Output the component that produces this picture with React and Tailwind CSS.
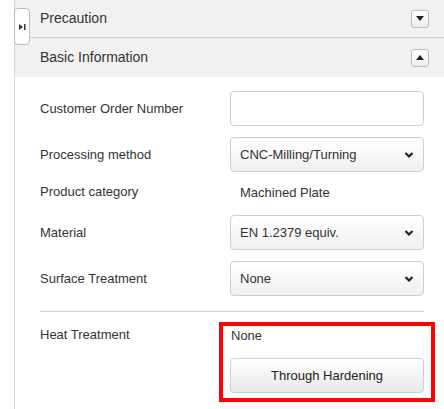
import React from "react";

function Chevron() {
  return (
    <svg width="10" height="8" viewBox="0 0 10 8" className="shrink-0">
      <path d="M1.5 2 L5 5.5 L8.5 2" fill="none" stroke="#222" strokeWidth="2.2" />
    </svg>
  );
}

function SelectBox({ value }) {
  return (
    <div className="flex h-[35px] w-[194px] items-center justify-between rounded-[4px] border border-[#cfcfcf] bg-gradient-to-b from-white to-[#f0f0f0] pl-[9px] pr-[9px] text-[13px] text-[#333]">
      <span>{value}</span>
      <Chevron />
    </div>
  );
}

function Toggle({ up }) {
  return (
    <div className="flex h-[18px] w-[18px] items-center justify-center rounded-[3px] border border-[#bdbdbd] bg-gradient-to-b from-white to-[#ececec]">
      <svg width="8" height="5" viewBox="0 0 8 5">
        {up ? <path d="M0 5 L4 0 L8 5 Z" fill="#222" /> : <path d="M0 0 L8 0 L4 5 Z" fill="#222" />}
      </svg>
    </div>
  );
}

function Row({ label, children, className }) {
  return (
    <div className={"flex items-center " + (className || "")}>
      <div className="w-[190px] shrink-0 text-[13px] text-[#333]">{label}</div>
      <div>{children}</div>
    </div>
  );
}

export default function App() {
  return (
    <div className="relative h-[409px] w-[444px] overflow-hidden bg-white font-['Liberation_Sans',Arial,sans-serif]">
      <div className="ml-[14px] flex h-full flex-col border-l border-[#d4d4d4]">
        <div className="flex h-[38px] items-center justify-between border-b border-[#d2d2d2] bg-[#f1f1f1] pl-[25px] pr-[15px]">
          <span className="text-[14px] text-[#333]">Precaution</span>
          <Toggle />
        </div>
        <div className="flex h-[39px] items-center justify-between bg-[#f1f1f1] pl-[25px] pr-[15px]">
          <span className="text-[14px] text-[#333]">Basic Information</span>
          <Toggle up />
        </div>
        <div className="flex flex-col pl-[25px] pr-[20px]">
          <Row label="Customer Order Number" className="mt-[14px] h-[35px]">
            <div className="h-[35px] w-[194px] rounded-[4px] border border-[#cfcfcf] bg-white" />
          </Row>
          <Row label="Processing method" className="mt-[11px] h-[35px]">
            <SelectBox value="CNC-Milling/Turning" />
          </Row>
          <Row label="Product category" className="mt-[10px] h-[20px]">
            <span className="pl-[10px] text-[13px] text-[#333]">Machined Plate</span>
          </Row>
          <Row label="Material" className="mt-[13px] h-[35px]">
            <SelectBox value="EN 1.2379 equiv." />
          </Row>
          <Row label="Surface Treatment" className="mt-[11px] h-[35px]">
            <SelectBox value="None" />
          </Row>
          <div className="mt-[15px] h-px w-[384px] bg-[#d0d0d0]" />
          <div className="mt-[10px] flex">
            <div className="w-[179px] shrink-0 pt-[3px] text-[13px] leading-[20px] text-[#333]">Heat Treatment</div>
            <div className="w-[216px] shrink-0 border-4 border-[#ff0000] pb-[5px] pl-[7px] pr-[8px] pt-[2px]">
              <div className="pl-[1px] text-[13px] leading-[16px] text-[#333]">None</div>
              <div className="mt-[14px] flex h-[35px] w-[194px] items-center justify-center rounded-[4px] border border-[#cfcfcf] bg-gradient-to-b from-white to-[#e8e8e8] text-[13px] text-[#222]">
                Through Hardening
              </div>
            </div>
          </div>
        </div>
      </div>
      <div className="absolute left-[14px] top-[8px] flex h-[37px] w-[16px] items-center justify-center rounded-[4px] border border-[#bdbdbd] bg-white">
        <svg width="7" height="6" viewBox="0 0 7 6">
          <path d="M0 0 L4 3 L0 6 Z" fill="#333" />
          <rect x="5" y="0" width="1.5" height="6" fill="#333" />
        </svg>
      </div>
    </div>
  );
}
